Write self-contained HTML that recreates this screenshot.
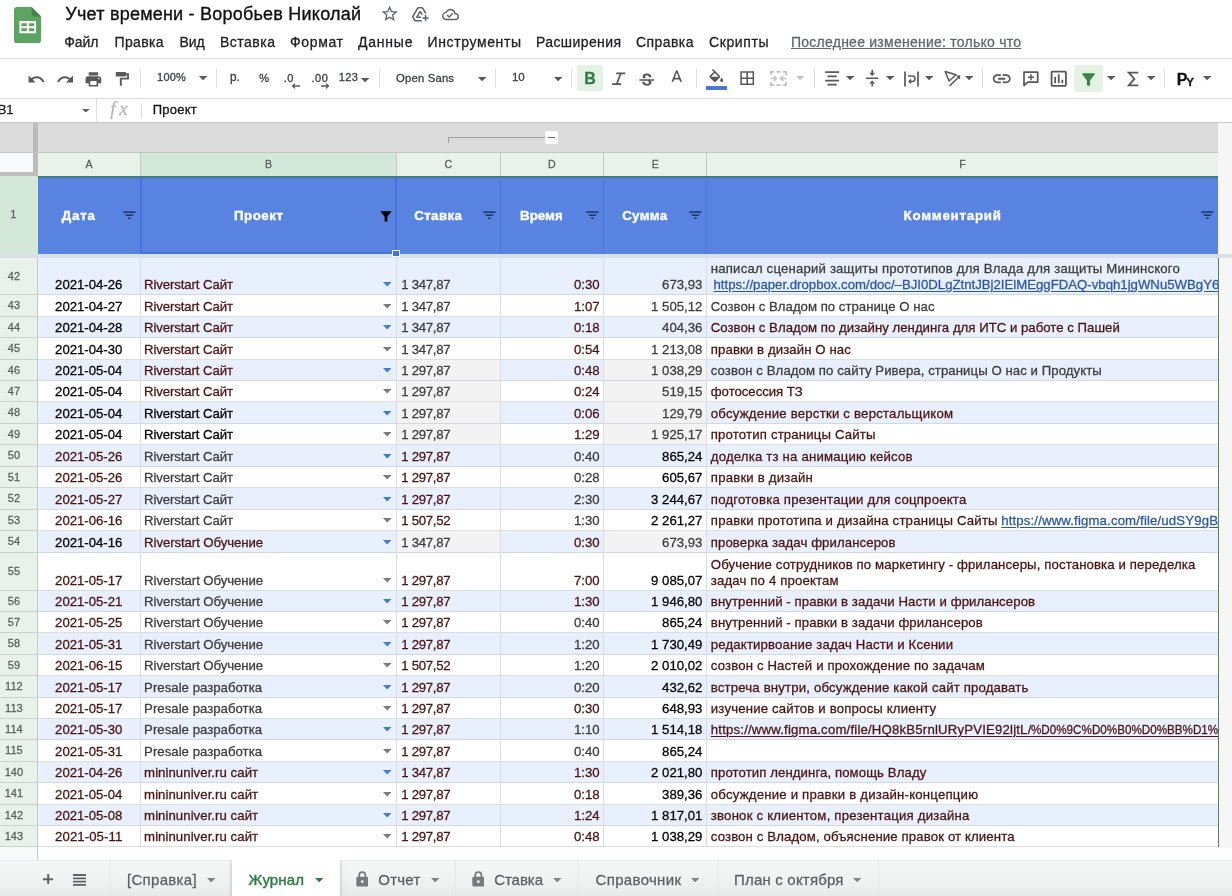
<!DOCTYPE html>
<html><head><meta charset="utf-8"><title>Sheet</title><style>
html,body{margin:0;padding:0;background:#fff}
#r{position:relative;width:1232px;height:896px;overflow:hidden;background:#fff;font-family:"Liberation Sans", sans-serif}
#r div,#r svg,#r span{position:absolute;display:block}
#r span{white-space:pre;line-height:0;-webkit-text-stroke-width:0.28px}
</style></head><body><div id="r">
<div style="left:0.00px;top:58.00px;width:1232.00px;height:1.00px;background:#dadce0;"></div>
<div style="left:0.00px;top:97.50px;width:1232.00px;height:1.00px;background:#d8dadd;"></div>
<div style="left:0.00px;top:122.00px;width:1232.00px;height:1.00px;background:#c8c8c8;"></div>
<div style="left:139.90px;top:68.50px;width:1.00px;height:19.50px;background:#dadce0;"></div>
<div style="left:215.90px;top:68.50px;width:1.00px;height:19.50px;background:#dadce0;"></div>
<div style="left:378.50px;top:68.50px;width:1.00px;height:19.50px;background:#dadce0;"></div>
<div style="left:494.90px;top:68.50px;width:1.00px;height:19.50px;background:#dadce0;"></div>
<div style="left:570.90px;top:68.50px;width:1.00px;height:19.50px;background:#dadce0;"></div>
<div style="left:696.20px;top:68.50px;width:1.00px;height:19.50px;background:#dadce0;"></div>
<div style="left:813.70px;top:68.50px;width:1.00px;height:19.50px;background:#dadce0;"></div>
<div style="left:982.20px;top:68.50px;width:1.00px;height:19.50px;background:#dadce0;"></div>
<div style="left:1164.20px;top:68.50px;width:1.00px;height:19.50px;background:#dadce0;"></div>
<div style="left:95.80px;top:99.00px;width:1.00px;height:23.00px;background:#dadce0;"></div>
<div style="left:141.00px;top:102.50px;width:1.00px;height:15.00px;background:#dadce0;"></div>
<div style="left:0.00px;top:123.00px;width:1218.40px;height:29.30px;background:#dcdcdc;"></div>
<div style="left:1218.40px;top:123.00px;width:13.60px;height:724.50px;background:#f6f6f6;"></div>
<div style="left:0.00px;top:152.30px;width:33.00px;height:20.20px;background:#f8f9fa;"></div>
<div style="left:33.00px;top:123.00px;width:4.70px;height:53.30px;background:#bcbcbc;"></div>
<div style="left:0.00px;top:172.40px;width:37.70px;height:3.90px;background:#bcbcbc;"></div>
<div style="left:37.70px;top:152.30px;width:1180.70px;height:24.00px;background:#e8f2ea;"></div>
<div style="left:140.50px;top:152.30px;width:256.10px;height:24.00px;background:#d4e8da;"></div>
<div style="left:0.00px;top:151.80px;width:1218.40px;height:1.00px;background:#c4c6c4;"></div>
<div style="left:140.00px;top:152.30px;width:1.00px;height:24.00px;background:#c3c9c4;"></div>
<div style="left:396.00px;top:152.30px;width:1.00px;height:24.00px;background:#c3c9c4;"></div>
<div style="left:500.00px;top:152.30px;width:1.00px;height:24.00px;background:#c3c9c4;"></div>
<div style="left:603.00px;top:152.30px;width:1.00px;height:24.00px;background:#c3c9c4;"></div>
<div style="left:706.00px;top:152.30px;width:1.00px;height:24.00px;background:#c3c9c4;"></div>
<div style="left:448.00px;top:136.80px;width:97.50px;height:1.00px;background:#a2a2a2;"></div>
<div style="left:448.00px;top:136.80px;width:1.00px;height:6.50px;background:#a2a2a2;"></div>
<div style="left:545.00px;top:130.80px;width:13.00px;height:13.20px;background:#ffffff;border-radius:2px;"></div>
<div style="left:548.20px;top:137.20px;width:6.60px;height:1.20px;background:#6a6a6a;"></div>
<div style="left:0.00px;top:176.30px;width:37.70px;height:77.40px;background:#d4e8da;"></div>
<div style="left:37.70px;top:176.30px;width:1180.70px;height:77.40px;background:#5983e1;"></div>
<div style="left:140.00px;top:177.00px;width:1.00px;height:76.70px;background:#4f78d6;"></div>
<div style="left:396.10px;top:177.00px;width:1.00px;height:76.70px;background:#4f78d6;"></div>
<div style="left:499.80px;top:177.00px;width:1.00px;height:76.70px;background:#4f78d6;"></div>
<div style="left:603.00px;top:177.00px;width:1.00px;height:76.70px;background:#4f78d6;"></div>
<div style="left:706.30px;top:177.00px;width:1.00px;height:76.70px;background:#4f78d6;"></div>
<div style="left:140.20px;top:176.30px;width:256.80px;height:2.00px;background:#4672da;"></div>
<div style="left:140.20px;top:251.90px;width:256.80px;height:2.00px;background:#4672da;"></div>
<div style="left:140.20px;top:176.30px;width:2.00px;height:77.40px;background:#4672da;"></div>
<div style="left:395.20px;top:176.30px;width:2.00px;height:77.40px;background:#4672da;"></div>
<div style="left:37.70px;top:175.80px;width:1180.70px;height:1.80px;background:#447a84;"></div>
<div style="left:0.00px;top:253.70px;width:1232.00px;height:4.30px;background:#dcdfe6;"></div>
<div style="left:37.70px;top:253.70px;width:1180.70px;height:4.30px;background:#d9e0f0;"></div>
<div style="left:0.00px;top:258.00px;width:37.70px;height:37.00px;background:#e8f2ea;"></div>
<div style="left:0.00px;top:294.00px;width:37.20px;height:1.00px;background:#c9d2cb;"></div>
<div style="left:37.70px;top:258.00px;width:1180.70px;height:37.00px;background:#e8effd;"></div>
<div style="left:37.70px;top:294.00px;width:1180.70px;height:1.00px;background:#d3d7e0;"></div>
<div style="left:0.00px;top:295.00px;width:37.70px;height:22.00px;background:#e8f2ea;"></div>
<div style="left:0.00px;top:316.00px;width:37.20px;height:1.00px;background:#c9d2cb;"></div>
<div style="left:37.70px;top:316.00px;width:1180.70px;height:1.00px;background:#dcdee2;"></div>
<div style="left:0.00px;top:317.00px;width:37.70px;height:21.00px;background:#e8f2ea;"></div>
<div style="left:0.00px;top:337.00px;width:37.20px;height:1.00px;background:#c9d2cb;"></div>
<div style="left:37.70px;top:317.00px;width:1180.70px;height:21.00px;background:#e8effd;"></div>
<div style="left:37.70px;top:337.00px;width:1180.70px;height:1.00px;background:#d3d7e0;"></div>
<div style="left:0.00px;top:338.00px;width:37.70px;height:22.00px;background:#e8f2ea;"></div>
<div style="left:0.00px;top:359.00px;width:37.20px;height:1.00px;background:#c9d2cb;"></div>
<div style="left:37.70px;top:359.00px;width:1180.70px;height:1.00px;background:#dcdee2;"></div>
<div style="left:0.00px;top:360.00px;width:37.70px;height:21.00px;background:#e8f2ea;"></div>
<div style="left:0.00px;top:380.00px;width:37.20px;height:1.00px;background:#c9d2cb;"></div>
<div style="left:37.70px;top:360.00px;width:1180.70px;height:21.00px;background:#e8effd;"></div>
<div style="left:396.60px;top:360.00px;width:103.70px;height:21.00px;background:#f3f3f3;"></div>
<div style="left:603.50px;top:360.00px;width:103.30px;height:21.00px;background:#f3f3f3;"></div>
<div style="left:37.70px;top:380.00px;width:1180.70px;height:1.00px;background:#d3d7e0;"></div>
<div style="left:0.00px;top:381.00px;width:37.70px;height:21.00px;background:#e8f2ea;"></div>
<div style="left:0.00px;top:401.00px;width:37.20px;height:1.00px;background:#c9d2cb;"></div>
<div style="left:396.60px;top:381.00px;width:103.70px;height:21.00px;background:#f3f3f3;"></div>
<div style="left:603.50px;top:381.00px;width:103.30px;height:21.00px;background:#f3f3f3;"></div>
<div style="left:37.70px;top:401.00px;width:1180.70px;height:1.00px;background:#dcdee2;"></div>
<div style="left:0.00px;top:402.00px;width:37.70px;height:22.00px;background:#e8f2ea;"></div>
<div style="left:0.00px;top:423.00px;width:37.20px;height:1.00px;background:#c9d2cb;"></div>
<div style="left:37.70px;top:402.00px;width:1180.70px;height:22.00px;background:#e8effd;"></div>
<div style="left:396.60px;top:402.00px;width:103.70px;height:22.00px;background:#f3f3f3;"></div>
<div style="left:603.50px;top:402.00px;width:103.30px;height:22.00px;background:#f3f3f3;"></div>
<div style="left:37.70px;top:423.00px;width:1180.70px;height:1.00px;background:#d3d7e0;"></div>
<div style="left:0.00px;top:424.00px;width:37.70px;height:21.00px;background:#e8f2ea;"></div>
<div style="left:0.00px;top:444.00px;width:37.20px;height:1.00px;background:#c9d2cb;"></div>
<div style="left:396.60px;top:424.00px;width:103.70px;height:21.00px;background:#f3f3f3;"></div>
<div style="left:603.50px;top:424.00px;width:103.30px;height:21.00px;background:#f3f3f3;"></div>
<div style="left:37.70px;top:444.00px;width:1180.70px;height:1.00px;background:#dcdee2;"></div>
<div style="left:0.00px;top:445.00px;width:37.70px;height:22.00px;background:#e8f2ea;"></div>
<div style="left:0.00px;top:466.00px;width:37.20px;height:1.00px;background:#c9d2cb;"></div>
<div style="left:37.70px;top:445.00px;width:1180.70px;height:22.00px;background:#e8effd;"></div>
<div style="left:37.70px;top:466.00px;width:1180.70px;height:1.00px;background:#d3d7e0;"></div>
<div style="left:0.00px;top:467.00px;width:37.70px;height:21.00px;background:#e8f2ea;"></div>
<div style="left:0.00px;top:487.00px;width:37.20px;height:1.00px;background:#c9d2cb;"></div>
<div style="left:37.70px;top:487.00px;width:1180.70px;height:1.00px;background:#dcdee2;"></div>
<div style="left:0.00px;top:488.00px;width:37.70px;height:22.00px;background:#e8f2ea;"></div>
<div style="left:0.00px;top:509.00px;width:37.20px;height:1.00px;background:#c9d2cb;"></div>
<div style="left:37.70px;top:488.00px;width:1180.70px;height:22.00px;background:#e8effd;"></div>
<div style="left:37.70px;top:509.00px;width:1180.70px;height:1.00px;background:#d3d7e0;"></div>
<div style="left:0.00px;top:510.00px;width:37.70px;height:21.00px;background:#e8f2ea;"></div>
<div style="left:0.00px;top:530.00px;width:37.20px;height:1.00px;background:#c9d2cb;"></div>
<div style="left:37.70px;top:530.00px;width:1180.70px;height:1.00px;background:#dcdee2;"></div>
<div style="left:0.00px;top:531.00px;width:37.70px;height:22.00px;background:#e8f2ea;"></div>
<div style="left:0.00px;top:552.00px;width:37.20px;height:1.00px;background:#c9d2cb;"></div>
<div style="left:37.70px;top:531.00px;width:1180.70px;height:22.00px;background:#e8effd;"></div>
<div style="left:396.60px;top:531.00px;width:103.70px;height:22.00px;background:#f3f3f3;"></div>
<div style="left:603.50px;top:531.00px;width:103.30px;height:22.00px;background:#f3f3f3;"></div>
<div style="left:37.70px;top:552.00px;width:1180.70px;height:1.00px;background:#d3d7e0;"></div>
<div style="left:0.00px;top:553.00px;width:37.70px;height:38.00px;background:#e8f2ea;"></div>
<div style="left:0.00px;top:590.00px;width:37.20px;height:1.00px;background:#c9d2cb;"></div>
<div style="left:37.70px;top:590.00px;width:1180.70px;height:1.00px;background:#dcdee2;"></div>
<div style="left:0.00px;top:591.00px;width:37.70px;height:21.00px;background:#e8f2ea;"></div>
<div style="left:0.00px;top:611.00px;width:37.20px;height:1.00px;background:#c9d2cb;"></div>
<div style="left:37.70px;top:591.00px;width:1180.70px;height:21.00px;background:#e8effd;"></div>
<div style="left:37.70px;top:611.00px;width:1180.70px;height:1.00px;background:#d3d7e0;"></div>
<div style="left:0.00px;top:612.00px;width:37.70px;height:21.00px;background:#e8f2ea;"></div>
<div style="left:0.00px;top:632.00px;width:37.20px;height:1.00px;background:#c9d2cb;"></div>
<div style="left:37.70px;top:632.00px;width:1180.70px;height:1.00px;background:#dcdee2;"></div>
<div style="left:0.00px;top:633.00px;width:37.70px;height:22.00px;background:#e8f2ea;"></div>
<div style="left:0.00px;top:654.00px;width:37.20px;height:1.00px;background:#c9d2cb;"></div>
<div style="left:37.70px;top:633.00px;width:1180.70px;height:22.00px;background:#e8effd;"></div>
<div style="left:37.70px;top:654.00px;width:1180.70px;height:1.00px;background:#d3d7e0;"></div>
<div style="left:0.00px;top:655.00px;width:37.70px;height:21.00px;background:#e8f2ea;"></div>
<div style="left:0.00px;top:675.00px;width:37.20px;height:1.00px;background:#c9d2cb;"></div>
<div style="left:37.70px;top:675.00px;width:1180.70px;height:1.00px;background:#dcdee2;"></div>
<div style="left:0.00px;top:676.00px;width:37.70px;height:22.00px;background:#e8f2ea;"></div>
<div style="left:0.00px;top:697.00px;width:37.20px;height:1.00px;background:#c9d2cb;"></div>
<div style="left:37.70px;top:676.00px;width:1180.70px;height:22.00px;background:#e8effd;"></div>
<div style="left:37.70px;top:697.00px;width:1180.70px;height:1.00px;background:#d3d7e0;"></div>
<div style="left:0.00px;top:698.00px;width:37.70px;height:21.00px;background:#e8f2ea;"></div>
<div style="left:0.00px;top:718.00px;width:37.20px;height:1.00px;background:#c9d2cb;"></div>
<div style="left:37.70px;top:718.00px;width:1180.70px;height:1.00px;background:#dcdee2;"></div>
<div style="left:0.00px;top:719.00px;width:37.70px;height:21.00px;background:#e8f2ea;"></div>
<div style="left:0.00px;top:739.00px;width:37.20px;height:1.00px;background:#c9d2cb;"></div>
<div style="left:37.70px;top:719.00px;width:1180.70px;height:21.00px;background:#e8effd;"></div>
<div style="left:37.70px;top:739.00px;width:1180.70px;height:1.00px;background:#d3d7e0;"></div>
<div style="left:0.00px;top:740.00px;width:37.70px;height:22.00px;background:#e8f2ea;"></div>
<div style="left:0.00px;top:761.00px;width:37.20px;height:1.00px;background:#c9d2cb;"></div>
<div style="left:37.70px;top:761.00px;width:1180.70px;height:1.00px;background:#dcdee2;"></div>
<div style="left:0.00px;top:762.00px;width:37.70px;height:21.00px;background:#e8f2ea;"></div>
<div style="left:0.00px;top:782.00px;width:37.20px;height:1.00px;background:#c9d2cb;"></div>
<div style="left:37.70px;top:762.00px;width:1180.70px;height:21.00px;background:#e8effd;"></div>
<div style="left:37.70px;top:782.00px;width:1180.70px;height:1.00px;background:#d3d7e0;"></div>
<div style="left:0.00px;top:783.00px;width:37.70px;height:22.00px;background:#e8f2ea;"></div>
<div style="left:0.00px;top:804.00px;width:37.20px;height:1.00px;background:#c9d2cb;"></div>
<div style="left:37.70px;top:804.00px;width:1180.70px;height:1.00px;background:#dcdee2;"></div>
<div style="left:0.00px;top:805.00px;width:37.70px;height:21.00px;background:#e8f2ea;"></div>
<div style="left:0.00px;top:825.00px;width:37.20px;height:1.00px;background:#c9d2cb;"></div>
<div style="left:37.70px;top:805.00px;width:1180.70px;height:21.00px;background:#e8effd;"></div>
<div style="left:37.70px;top:825.00px;width:1180.70px;height:1.00px;background:#d3d7e0;"></div>
<div style="left:0.00px;top:826.00px;width:37.70px;height:21.00px;background:#e8f2ea;"></div>
<div style="left:0.00px;top:846.00px;width:37.20px;height:1.00px;background:#c9d2cb;"></div>
<div style="left:37.70px;top:846.00px;width:1180.70px;height:1.00px;background:#dcdee2;"></div>
<div style="left:140.00px;top:257.50px;width:1.00px;height:589.50px;background:#d9dce3;"></div>
<div style="left:396.00px;top:257.50px;width:1.00px;height:589.50px;background:#d9dce3;"></div>
<div style="left:500.00px;top:257.50px;width:1.00px;height:589.50px;background:#d9dce3;"></div>
<div style="left:603.00px;top:257.50px;width:1.00px;height:589.50px;background:#d9dce3;"></div>
<div style="left:706.00px;top:257.50px;width:1.00px;height:589.50px;background:#d9dce3;"></div>
<div style="left:37.20px;top:257.50px;width:1.00px;height:602.50px;background:#c3c9c4;"></div>
<div style="left:0.00px;top:847.00px;width:37.20px;height:13.00px;background:#f8f9fa;"></div>
<div style="left:0.00px;top:860.00px;width:1232.00px;height:36.00px;background:linear-gradient(#f5f6f6 0%,#f2f3f3 45%,#e9eaea 100%);"></div>
<div style="left:0.00px;top:859.60px;width:1232.00px;height:1.00px;background:#e9eaeb;"></div>
<div style="left:0;top:860px;width:1232px;height:36px;overflow:hidden"><div style="left:231.5px;top:0;width:108.5px;height:40px;background:#fff;box-shadow:0 0 4px rgba(0,0,0,0.28)"></div></div>
<div style="left:108.90px;top:860.00px;width:1.00px;height:36.00px;background:#e6e7e8;"></div>
<div style="left:455.10px;top:860.00px;width:1.00px;height:36.00px;background:#e6e7e8;"></div>
<div style="left:578.10px;top:860.00px;width:1.00px;height:36.00px;background:#e6e7e8;"></div>
<div style="left:716.50px;top:860.00px;width:1.00px;height:36.00px;background:#e6e7e8;"></div>
<div style="left:878.00px;top:860.00px;width:1.00px;height:36.00px;background:#e6e7e8;"></div>
<div style="left:577.10px;top:64.80px;width:25.70px;height:26.40px;background:#e4f2e6;border-radius:3px;"></div>
<div style="left:706.00px;top:86.30px;width:21.00px;height:3.60px;background:#4a76da;"></div>
<div style="left:1073.90px;top:64.70px;width:28.80px;height:27.00px;background:#e4f2e6;border-radius:3px;"></div>
<div id="tx" style="left:0;top:0;width:1232px;height:896px;will-change:transform">
<span style="top:13.76px;font-size:18px;color:#111111;letter-spacing:0.222px;left:65.30px;-webkit-text-stroke-width:0.35px;">Учет времени - Воробьев Николай</span>
<span style="top:41.75px;font-size:14px;color:#202124;letter-spacing:-0.107px;left:64.30px;">Файл</span>
<span style="top:41.75px;font-size:14px;color:#202124;letter-spacing:0.341px;left:114.60px;">Правка</span>
<span style="top:41.75px;font-size:14px;color:#202124;letter-spacing:-0.164px;left:179.60px;">Вид</span>
<span style="top:41.75px;font-size:14px;color:#202124;letter-spacing:0.492px;left:220.00px;">Вставка</span>
<span style="top:41.75px;font-size:14px;color:#202124;letter-spacing:0.653px;left:290.00px;">Формат</span>
<span style="top:41.75px;font-size:14px;color:#202124;letter-spacing:0.781px;left:358.00px;">Данные</span>
<span style="top:41.75px;font-size:14px;color:#202124;letter-spacing:0.620px;left:427.50px;">Инструменты</span>
<span style="top:41.75px;font-size:14px;color:#202124;letter-spacing:0.398px;left:536.00px;">Расширения</span>
<span style="top:41.75px;font-size:14px;color:#202124;letter-spacing:0.430px;left:636.00px;">Справка</span>
<span style="top:41.75px;font-size:14px;color:#202124;letter-spacing:0.599px;left:709.00px;">Скрипты</span>
<span style="top:41.75px;font-size:14px;color:#63676b;letter-spacing:0.245px;left:791.00px;text-decoration:underline;text-underline-offset:1px;">Последнее изменение: только что</span>
<span style="top:77.49px;font-size:11px;color:#3c4043;letter-spacing:0.186px;left:157.10px;-webkit-text-stroke:0.3px #3c4043;">100%</span>
<span style="top:76.79px;font-size:13.6px;color:#3c4043;left:230.00px;transform:scaleX(0.8639);transform-origin:0 0;-webkit-text-stroke:0.3px #3c4043;">р.</span>
<span style="top:77.59px;font-size:11px;color:#3c4043;letter-spacing:-0.781px;left:259.20px;-webkit-text-stroke:0.3px #3c4043;">%</span>
<span style="top:77.59px;font-size:11px;color:#3c4043;letter-spacing:0.512px;left:283.80px;-webkit-text-stroke:0.3px #3c4043;">.0</span>
<span style="top:77.59px;font-size:11px;color:#3c4043;letter-spacing:0.652px;left:311.40px;-webkit-text-stroke:0.3px #3c4043;">.00</span>
<span style="top:77.49px;font-size:11px;color:#3c4043;letter-spacing:0.370px;left:338.70px;-webkit-text-stroke:0.3px #3c4043;">123</span>
<span style="top:78.18px;font-size:11.3px;color:#3c4043;letter-spacing:0.184px;left:396.00px;-webkit-text-stroke:0.3px #3c4043;">Open Sans</span>
<span style="top:77.22px;font-size:11.5px;color:#3c4043;letter-spacing:-0.297px;left:512.10px;-webkit-text-stroke:0.3px #3c4043;">10</span>
<span style="top:109.90px;font-size:13px;color:#202124;letter-spacing:-0.300px;left:-2.20px;">B1</span>
<span style="top:109.42px;font-size:19px;color:#b8b8b8;letter-spacing:3.881px;left:110.20px;font-family:'Liberation Serif',serif;font-style:italic;">fx</span>
<span style="top:109.90px;font-size:13px;color:#111;letter-spacing:0.254px;left:152.70px;">Проект</span>
<span style="top:164.13px;font-size:10.6px;color:#5a5f5c;left:89.00px;transform:translateX(-50%);margin-left:0.00px;">A</span>
<span style="top:164.13px;font-size:10.6px;color:#5a5f5c;left:268.50px;transform:translateX(-50%);margin-left:0.00px;">B</span>
<span style="top:164.13px;font-size:10.6px;color:#5a5f5c;left:448.40px;transform:translateX(-50%);margin-left:0.00px;">C</span>
<span style="top:164.13px;font-size:10.6px;color:#5a5f5c;left:551.90px;transform:translateX(-50%);margin-left:0.00px;">D</span>
<span style="top:164.13px;font-size:10.6px;color:#5a5f5c;left:655.20px;transform:translateX(-50%);margin-left:0.00px;">E</span>
<span style="top:164.13px;font-size:10.6px;color:#5a5f5c;left:962.60px;transform:translateX(-50%);margin-left:0.00px;">F</span>
<span style="top:214.19px;font-size:11px;color:#5a5f5c;left:13.40px;transform:translateX(-50%);margin-left:0.00px;">1</span>
<span style="top:215.88px;font-size:13.33px;color:#ffffff;font-weight:700;letter-spacing:0.814px;left:61.70px;-webkit-text-stroke:0.35px #fff;">Дата</span>
<span style="top:215.88px;font-size:13.33px;color:#ffffff;font-weight:700;letter-spacing:0.503px;left:234.00px;-webkit-text-stroke:0.35px #fff;">Проект</span>
<span style="top:215.88px;font-size:13.33px;color:#ffffff;font-weight:700;letter-spacing:0.391px;left:414.20px;-webkit-text-stroke:0.35px #fff;">Ставка</span>
<span style="top:215.88px;font-size:13.33px;color:#ffffff;font-weight:700;letter-spacing:0.040px;left:520.00px;-webkit-text-stroke:0.35px #fff;">Время</span>
<span style="top:215.88px;font-size:13.33px;color:#ffffff;font-weight:700;letter-spacing:0.293px;left:622.20px;-webkit-text-stroke:0.35px #fff;">Сумма</span>
<span style="top:215.88px;font-size:13.33px;color:#ffffff;font-weight:700;letter-spacing:0.773px;left:903.50px;-webkit-text-stroke:0.35px #fff;">Комментарий</span>
<span style="top:275.99px;font-size:11px;color:#5a5f5c;left:13.90px;transform:translateX(-50%);margin-left:0.00px;">42</span>
<span style="top:285.23px;font-size:13.2px;color:#000000;letter-spacing:-0.030px;left:88.70px;transform:translateX(-50%);margin-left:-0.01px;">2021-04-26</span>
<span style="top:285.23px;font-size:13.2px;color:#491313;letter-spacing:-0.114px;left:144.10px;">Riverstart Сайт</span>
<span style="top:285.23px;font-size:13.2px;color:#3d3d3d;letter-spacing:-0.292px;left:401.30px;">1 347,87</span>
<span style="top:285.23px;font-size:13.2px;color:#491313;right:632.40px;">0:30</span>
<span style="top:285.23px;font-size:13.2px;color:#3d3d3d;right:529.60px;">673,93</span>
<span style="top:305.49px;font-size:11px;color:#5a5f5c;left:13.90px;transform:translateX(-50%);margin-left:0.00px;">43</span>
<span style="top:307.23px;font-size:13.2px;color:#000000;letter-spacing:-0.030px;left:88.70px;transform:translateX(-50%);margin-left:-0.01px;">2021-04-27</span>
<span style="top:307.23px;font-size:13.2px;color:#491313;letter-spacing:-0.114px;left:144.10px;">Riverstart Сайт</span>
<span style="top:307.23px;font-size:13.2px;color:#3d3d3d;letter-spacing:-0.292px;left:401.30px;">1 347,87</span>
<span style="top:307.23px;font-size:13.2px;color:#491313;right:632.40px;">1:07</span>
<span style="top:307.23px;font-size:13.2px;color:#3d3d3d;right:529.60px;">1 505,12</span>
<span style="top:307.23px;font-size:13.2px;color:#3d3d3d;letter-spacing:0.010px;left:710.80px;">Созвон с Владом по странице О нас</span>
<span style="top:326.99px;font-size:11px;color:#5a5f5c;left:13.90px;transform:translateX(-50%);margin-left:0.00px;">44</span>
<span style="top:328.23px;font-size:13.2px;color:#000000;letter-spacing:-0.030px;left:88.70px;transform:translateX(-50%);margin-left:-0.01px;">2021-04-28</span>
<span style="top:328.23px;font-size:13.2px;color:#491313;letter-spacing:-0.114px;left:144.10px;">Riverstart Сайт</span>
<span style="top:328.23px;font-size:13.2px;color:#3d3d3d;letter-spacing:-0.292px;left:401.30px;">1 347,87</span>
<span style="top:328.23px;font-size:13.2px;color:#491313;right:632.40px;">0:18</span>
<span style="top:328.23px;font-size:13.2px;color:#3d3d3d;right:529.60px;">404,36</span>
<span style="top:328.23px;font-size:13.2px;color:#491313;letter-spacing:0.019px;left:710.80px;">Созвон с Владом по дизайну лендинга для ИТС и работе с Пашей</span>
<span style="top:348.49px;font-size:11px;color:#5a5f5c;left:13.90px;transform:translateX(-50%);margin-left:0.00px;">45</span>
<span style="top:350.23px;font-size:13.2px;color:#000000;letter-spacing:-0.030px;left:88.70px;transform:translateX(-50%);margin-left:-0.01px;">2021-04-30</span>
<span style="top:350.23px;font-size:13.2px;color:#491313;letter-spacing:-0.114px;left:144.10px;">Riverstart Сайт</span>
<span style="top:350.23px;font-size:13.2px;color:#3d3d3d;letter-spacing:-0.292px;left:401.30px;">1 347,87</span>
<span style="top:350.23px;font-size:13.2px;color:#491313;right:632.40px;">0:54</span>
<span style="top:350.23px;font-size:13.2px;color:#3d3d3d;right:529.60px;">1 213,08</span>
<span style="top:350.23px;font-size:13.2px;color:#491313;letter-spacing:0.096px;left:710.80px;">правки в дизайн О нас</span>
<span style="top:369.99px;font-size:11px;color:#5a5f5c;left:13.90px;transform:translateX(-50%);margin-left:0.00px;">46</span>
<span style="top:371.23px;font-size:13.2px;color:#000000;letter-spacing:-0.030px;left:88.70px;transform:translateX(-50%);margin-left:-0.01px;">2021-05-04</span>
<span style="top:371.23px;font-size:13.2px;color:#491313;letter-spacing:-0.114px;left:144.10px;">Riverstart Сайт</span>
<span style="top:371.23px;font-size:13.2px;color:#3d3d3d;letter-spacing:-0.292px;left:401.30px;">1 297,87</span>
<span style="top:371.23px;font-size:13.2px;color:#491313;right:632.40px;">0:48</span>
<span style="top:371.23px;font-size:13.2px;color:#3d3d3d;right:529.60px;">1 038,29</span>
<span style="top:371.23px;font-size:13.2px;color:#3d3d3d;letter-spacing:0.066px;left:710.80px;">созвон с Владом по сайту Ривера, страницы О нас и Продукты</span>
<span style="top:390.99px;font-size:11px;color:#5a5f5c;left:13.90px;transform:translateX(-50%);margin-left:0.00px;">47</span>
<span style="top:392.23px;font-size:13.2px;color:#000000;letter-spacing:-0.030px;left:88.70px;transform:translateX(-50%);margin-left:-0.01px;">2021-05-04</span>
<span style="top:392.23px;font-size:13.2px;color:#491313;letter-spacing:-0.114px;left:144.10px;">Riverstart Сайт</span>
<span style="top:392.23px;font-size:13.2px;color:#3d3d3d;letter-spacing:-0.292px;left:401.30px;">1 297,87</span>
<span style="top:392.23px;font-size:13.2px;color:#491313;right:632.40px;">0:24</span>
<span style="top:392.23px;font-size:13.2px;color:#3d3d3d;right:529.60px;">519,15</span>
<span style="top:392.23px;font-size:13.2px;color:#491313;letter-spacing:-0.032px;left:710.80px;">фотосессия ТЗ</span>
<span style="top:412.49px;font-size:11px;color:#5a5f5c;left:13.90px;transform:translateX(-50%);margin-left:0.00px;">48</span>
<span style="top:414.23px;font-size:13.2px;color:#000000;letter-spacing:-0.030px;left:88.70px;transform:translateX(-50%);margin-left:-0.01px;">2021-05-04</span>
<span style="top:414.23px;font-size:13.2px;color:#000000;letter-spacing:-0.114px;left:144.10px;">Riverstart Сайт</span>
<span style="top:414.23px;font-size:13.2px;color:#3d3d3d;letter-spacing:-0.292px;left:401.30px;">1 297,87</span>
<span style="top:414.23px;font-size:13.2px;color:#491313;right:632.40px;">0:06</span>
<span style="top:414.23px;font-size:13.2px;color:#3d3d3d;right:529.60px;">129,79</span>
<span style="top:414.23px;font-size:13.2px;color:#491313;letter-spacing:0.211px;left:710.80px;">обсуждение верстки с верстальщиком</span>
<span style="top:433.99px;font-size:11px;color:#5a5f5c;left:13.90px;transform:translateX(-50%);margin-left:0.00px;">49</span>
<span style="top:435.23px;font-size:13.2px;color:#000000;letter-spacing:-0.030px;left:88.70px;transform:translateX(-50%);margin-left:-0.01px;">2021-05-04</span>
<span style="top:435.23px;font-size:13.2px;color:#000000;letter-spacing:-0.114px;left:144.10px;">Riverstart Сайт</span>
<span style="top:435.23px;font-size:13.2px;color:#3d3d3d;letter-spacing:-0.292px;left:401.30px;">1 297,87</span>
<span style="top:435.23px;font-size:13.2px;color:#491313;right:632.40px;">1:29</span>
<span style="top:435.23px;font-size:13.2px;color:#3d3d3d;right:529.60px;">1 925,17</span>
<span style="top:435.23px;font-size:13.2px;color:#491313;letter-spacing:0.158px;left:710.80px;">прототип страницы Сайты</span>
<span style="top:455.49px;font-size:11px;color:#5a5f5c;left:13.90px;transform:translateX(-50%);margin-left:0.00px;">50</span>
<span style="top:457.23px;font-size:13.2px;color:#491313;letter-spacing:-0.030px;left:88.70px;transform:translateX(-50%);margin-left:-0.01px;">2021-05-26</span>
<span style="top:457.23px;font-size:13.2px;color:#3d3d3d;letter-spacing:-0.114px;left:144.10px;">Riverstart Сайт</span>
<span style="top:457.23px;font-size:13.2px;color:#491313;letter-spacing:-0.292px;left:401.30px;">1 297,87</span>
<span style="top:457.23px;font-size:13.2px;color:#3d3d3d;right:632.40px;">0:40</span>
<span style="top:457.23px;font-size:13.2px;color:#000000;right:529.60px;">865,24</span>
<span style="top:457.23px;font-size:13.2px;color:#491313;letter-spacing:0.179px;left:710.80px;">доделка тз на анимацию кейсов</span>
<span style="top:476.99px;font-size:11px;color:#5a5f5c;left:13.90px;transform:translateX(-50%);margin-left:0.00px;">51</span>
<span style="top:478.23px;font-size:13.2px;color:#491313;letter-spacing:-0.030px;left:88.70px;transform:translateX(-50%);margin-left:-0.01px;">2021-05-26</span>
<span style="top:478.23px;font-size:13.2px;color:#3d3d3d;letter-spacing:-0.114px;left:144.10px;">Riverstart Сайт</span>
<span style="top:478.23px;font-size:13.2px;color:#491313;letter-spacing:-0.292px;left:401.30px;">1 297,87</span>
<span style="top:478.23px;font-size:13.2px;color:#3d3d3d;right:632.40px;">0:28</span>
<span style="top:478.23px;font-size:13.2px;color:#000000;right:529.60px;">605,67</span>
<span style="top:478.23px;font-size:13.2px;color:#491313;letter-spacing:0.194px;left:710.80px;">правки в дизайн</span>
<span style="top:498.49px;font-size:11px;color:#5a5f5c;left:13.90px;transform:translateX(-50%);margin-left:0.00px;">52</span>
<span style="top:500.23px;font-size:13.2px;color:#491313;letter-spacing:-0.030px;left:88.70px;transform:translateX(-50%);margin-left:-0.01px;">2021-05-27</span>
<span style="top:500.23px;font-size:13.2px;color:#3d3d3d;letter-spacing:-0.114px;left:144.10px;">Riverstart Сайт</span>
<span style="top:500.23px;font-size:13.2px;color:#491313;letter-spacing:-0.292px;left:401.30px;">1 297,87</span>
<span style="top:500.23px;font-size:13.2px;color:#3d3d3d;right:632.40px;">2:30</span>
<span style="top:500.23px;font-size:13.2px;color:#000000;right:529.60px;">3 244,67</span>
<span style="top:500.23px;font-size:13.2px;color:#491313;letter-spacing:0.207px;left:710.80px;">подготовка презентации для соцпроекта</span>
<span style="top:519.99px;font-size:11px;color:#5a5f5c;left:13.90px;transform:translateX(-50%);margin-left:0.00px;">53</span>
<span style="top:521.23px;font-size:13.2px;color:#491313;letter-spacing:-0.030px;left:88.70px;transform:translateX(-50%);margin-left:-0.01px;">2021-06-16</span>
<span style="top:521.23px;font-size:13.2px;color:#3d3d3d;letter-spacing:-0.114px;left:144.10px;">Riverstart Сайт</span>
<span style="top:521.23px;font-size:13.2px;color:#491313;letter-spacing:-0.292px;left:401.30px;">1 507,52</span>
<span style="top:521.23px;font-size:13.2px;color:#3d3d3d;right:632.40px;">1:30</span>
<span style="top:521.23px;font-size:13.2px;color:#000000;right:529.60px;">2 261,27</span>
<span style="top:541.49px;font-size:11px;color:#5a5f5c;left:13.90px;transform:translateX(-50%);margin-left:0.00px;">54</span>
<span style="top:543.23px;font-size:13.2px;color:#000000;letter-spacing:-0.030px;left:88.70px;transform:translateX(-50%);margin-left:-0.01px;">2021-04-16</span>
<span style="top:543.23px;font-size:13.2px;color:#491313;letter-spacing:-0.077px;left:144.10px;">Riverstart Обучение</span>
<span style="top:543.23px;font-size:13.2px;color:#3d3d3d;letter-spacing:-0.292px;left:401.30px;">1 347,87</span>
<span style="top:543.23px;font-size:13.2px;color:#491313;right:632.40px;">0:30</span>
<span style="top:543.23px;font-size:13.2px;color:#3d3d3d;right:529.60px;">673,93</span>
<span style="top:543.23px;font-size:13.2px;color:#491313;letter-spacing:0.087px;left:710.80px;">проверка задач фрилансеров</span>
<span style="top:571.49px;font-size:11px;color:#5a5f5c;left:13.90px;transform:translateX(-50%);margin-left:0.00px;">55</span>
<span style="top:581.23px;font-size:13.2px;color:#491313;letter-spacing:-0.030px;left:88.70px;transform:translateX(-50%);margin-left:-0.01px;">2021-05-17</span>
<span style="top:581.23px;font-size:13.2px;color:#3d3d3d;letter-spacing:-0.077px;left:144.10px;">Riverstart Обучение</span>
<span style="top:581.23px;font-size:13.2px;color:#491313;letter-spacing:-0.292px;left:401.30px;">1 297,87</span>
<span style="top:581.23px;font-size:13.2px;color:#491313;right:632.40px;">7:00</span>
<span style="top:581.23px;font-size:13.2px;color:#000000;right:529.60px;">9 085,07</span>
<span style="top:600.99px;font-size:11px;color:#5a5f5c;left:13.90px;transform:translateX(-50%);margin-left:0.00px;">56</span>
<span style="top:602.23px;font-size:13.2px;color:#491313;letter-spacing:-0.030px;left:88.70px;transform:translateX(-50%);margin-left:-0.01px;">2021-05-21</span>
<span style="top:602.23px;font-size:13.2px;color:#3d3d3d;letter-spacing:-0.077px;left:144.10px;">Riverstart Обучение</span>
<span style="top:602.23px;font-size:13.2px;color:#491313;letter-spacing:-0.292px;left:401.30px;">1 297,87</span>
<span style="top:602.23px;font-size:13.2px;color:#491313;right:632.40px;">1:30</span>
<span style="top:602.23px;font-size:13.2px;color:#000000;right:529.60px;">1 946,80</span>
<span style="top:602.23px;font-size:13.2px;color:#491313;letter-spacing:0.093px;left:710.80px;">внутренний - правки в задачи Насти и фрилансеров</span>
<span style="top:621.99px;font-size:11px;color:#5a5f5c;left:13.90px;transform:translateX(-50%);margin-left:0.00px;">57</span>
<span style="top:623.23px;font-size:13.2px;color:#491313;letter-spacing:-0.030px;left:88.70px;transform:translateX(-50%);margin-left:-0.01px;">2021-05-25</span>
<span style="top:623.23px;font-size:13.2px;color:#3d3d3d;letter-spacing:-0.077px;left:144.10px;">Riverstart Обучение</span>
<span style="top:623.23px;font-size:13.2px;color:#491313;letter-spacing:-0.292px;left:401.30px;">1 297,87</span>
<span style="top:623.23px;font-size:13.2px;color:#3d3d3d;right:632.40px;">0:40</span>
<span style="top:623.23px;font-size:13.2px;color:#000000;right:529.60px;">865,24</span>
<span style="top:623.23px;font-size:13.2px;color:#491313;letter-spacing:0.093px;left:710.80px;">внутренний - правки в задачи фрилансеров</span>
<span style="top:643.49px;font-size:11px;color:#5a5f5c;left:13.90px;transform:translateX(-50%);margin-left:0.00px;">58</span>
<span style="top:645.23px;font-size:13.2px;color:#491313;letter-spacing:-0.030px;left:88.70px;transform:translateX(-50%);margin-left:-0.01px;">2021-05-31</span>
<span style="top:645.23px;font-size:13.2px;color:#3d3d3d;letter-spacing:-0.077px;left:144.10px;">Riverstart Обучение</span>
<span style="top:645.23px;font-size:13.2px;color:#491313;letter-spacing:-0.292px;left:401.30px;">1 297,87</span>
<span style="top:645.23px;font-size:13.2px;color:#3d3d3d;right:632.40px;">1:20</span>
<span style="top:645.23px;font-size:13.2px;color:#000000;right:529.60px;">1 730,49</span>
<span style="top:645.23px;font-size:13.2px;color:#491313;letter-spacing:0.151px;left:710.80px;">редактирвоание задач Насти и Ксении</span>
<span style="top:664.99px;font-size:11px;color:#5a5f5c;left:13.90px;transform:translateX(-50%);margin-left:0.00px;">59</span>
<span style="top:666.23px;font-size:13.2px;color:#491313;letter-spacing:-0.030px;left:88.70px;transform:translateX(-50%);margin-left:-0.01px;">2021-06-15</span>
<span style="top:666.23px;font-size:13.2px;color:#3d3d3d;letter-spacing:-0.077px;left:144.10px;">Riverstart Обучение</span>
<span style="top:666.23px;font-size:13.2px;color:#491313;letter-spacing:-0.292px;left:401.30px;">1 507,52</span>
<span style="top:666.23px;font-size:13.2px;color:#3d3d3d;right:632.40px;">1:20</span>
<span style="top:666.23px;font-size:13.2px;color:#000000;right:529.60px;">2 010,02</span>
<span style="top:666.23px;font-size:13.2px;color:#491313;letter-spacing:0.143px;left:710.80px;">созвон с Настей и прохождение по задачам</span>
<span style="top:686.49px;font-size:11px;color:#5a5f5c;left:13.90px;transform:translateX(-50%);margin-left:0.00px;">112</span>
<span style="top:688.23px;font-size:13.2px;color:#491313;letter-spacing:-0.030px;left:88.70px;transform:translateX(-50%);margin-left:-0.01px;">2021-05-17</span>
<span style="top:688.23px;font-size:13.2px;color:#3d3d3d;letter-spacing:0.020px;left:144.10px;">Presale разработка</span>
<span style="top:688.23px;font-size:13.2px;color:#491313;letter-spacing:-0.292px;left:401.30px;">1 297,87</span>
<span style="top:688.23px;font-size:13.2px;color:#3d3d3d;right:632.40px;">0:20</span>
<span style="top:688.23px;font-size:13.2px;color:#000000;right:529.60px;">432,62</span>
<span style="top:688.23px;font-size:13.2px;color:#491313;letter-spacing:0.162px;left:710.80px;">встреча внутри, обсуждение какой сайт продавать</span>
<span style="top:707.99px;font-size:11px;color:#5a5f5c;left:13.90px;transform:translateX(-50%);margin-left:0.00px;">113</span>
<span style="top:709.23px;font-size:13.2px;color:#491313;letter-spacing:-0.030px;left:88.70px;transform:translateX(-50%);margin-left:-0.01px;">2021-05-17</span>
<span style="top:709.23px;font-size:13.2px;color:#3d3d3d;letter-spacing:0.020px;left:144.10px;">Presale разработка</span>
<span style="top:709.23px;font-size:13.2px;color:#491313;letter-spacing:-0.292px;left:401.30px;">1 297,87</span>
<span style="top:709.23px;font-size:13.2px;color:#491313;right:632.40px;">0:30</span>
<span style="top:709.23px;font-size:13.2px;color:#000000;right:529.60px;">648,93</span>
<span style="top:709.23px;font-size:13.2px;color:#491313;letter-spacing:0.164px;left:710.80px;">изучение сайтов и вопросы клиенту</span>
<span style="top:728.99px;font-size:11px;color:#5a5f5c;left:13.90px;transform:translateX(-50%);margin-left:0.00px;">114</span>
<span style="top:730.23px;font-size:13.2px;color:#491313;letter-spacing:-0.030px;left:88.70px;transform:translateX(-50%);margin-left:-0.01px;">2021-05-30</span>
<span style="top:730.23px;font-size:13.2px;color:#3d3d3d;letter-spacing:0.020px;left:144.10px;">Presale разработка</span>
<span style="top:730.23px;font-size:13.2px;color:#491313;letter-spacing:-0.292px;left:401.30px;">1 297,87</span>
<span style="top:730.23px;font-size:13.2px;color:#3d3d3d;right:632.40px;">1:10</span>
<span style="top:730.23px;font-size:13.2px;color:#000000;right:529.60px;">1 514,18</span>
<span style="top:750.49px;font-size:11px;color:#5a5f5c;left:13.90px;transform:translateX(-50%);margin-left:0.00px;">115</span>
<span style="top:752.23px;font-size:13.2px;color:#491313;letter-spacing:-0.030px;left:88.70px;transform:translateX(-50%);margin-left:-0.01px;">2021-05-31</span>
<span style="top:752.23px;font-size:13.2px;color:#3d3d3d;letter-spacing:0.020px;left:144.10px;">Presale разработка</span>
<span style="top:752.23px;font-size:13.2px;color:#491313;letter-spacing:-0.292px;left:401.30px;">1 297,87</span>
<span style="top:752.23px;font-size:13.2px;color:#3d3d3d;right:632.40px;">0:40</span>
<span style="top:752.23px;font-size:13.2px;color:#000000;right:529.60px;">865,24</span>
<span style="top:771.99px;font-size:11px;color:#5a5f5c;left:13.90px;transform:translateX(-50%);margin-left:0.00px;">140</span>
<span style="top:773.23px;font-size:13.2px;color:#491313;letter-spacing:-0.030px;left:88.70px;transform:translateX(-50%);margin-left:-0.01px;">2021-04-26</span>
<span style="top:773.23px;font-size:13.2px;color:#491313;letter-spacing:0.050px;left:144.10px;">mininuniver.ru сайт</span>
<span style="top:773.23px;font-size:13.2px;color:#491313;letter-spacing:-0.292px;left:401.30px;">1 347,87</span>
<span style="top:773.23px;font-size:13.2px;color:#491313;right:632.40px;">1:30</span>
<span style="top:773.23px;font-size:13.2px;color:#000000;right:529.60px;">2 021,80</span>
<span style="top:773.23px;font-size:13.2px;color:#491313;letter-spacing:0.087px;left:710.80px;">прототип лендинга, помощь Владу</span>
<span style="top:793.49px;font-size:11px;color:#5a5f5c;left:13.90px;transform:translateX(-50%);margin-left:0.00px;">141</span>
<span style="top:795.23px;font-size:13.2px;color:#491313;letter-spacing:-0.030px;left:88.70px;transform:translateX(-50%);margin-left:-0.01px;">2021-05-04</span>
<span style="top:795.23px;font-size:13.2px;color:#491313;letter-spacing:0.050px;left:144.10px;">mininuniver.ru сайт</span>
<span style="top:795.23px;font-size:13.2px;color:#491313;letter-spacing:-0.292px;left:401.30px;">1 297,87</span>
<span style="top:795.23px;font-size:13.2px;color:#491313;right:632.40px;">0:18</span>
<span style="top:795.23px;font-size:13.2px;color:#000000;right:529.60px;">389,36</span>
<span style="top:795.23px;font-size:13.2px;color:#491313;letter-spacing:0.208px;left:710.80px;">обсуждение и правки в дизайн-концепцию</span>
<span style="top:814.99px;font-size:11px;color:#5a5f5c;left:13.90px;transform:translateX(-50%);margin-left:0.00px;">142</span>
<span style="top:816.23px;font-size:13.2px;color:#491313;letter-spacing:-0.030px;left:88.70px;transform:translateX(-50%);margin-left:-0.01px;">2021-05-08</span>
<span style="top:816.23px;font-size:13.2px;color:#491313;letter-spacing:0.050px;left:144.10px;">mininuniver.ru сайт</span>
<span style="top:816.23px;font-size:13.2px;color:#491313;letter-spacing:-0.292px;left:401.30px;">1 297,87</span>
<span style="top:816.23px;font-size:13.2px;color:#491313;right:632.40px;">1:24</span>
<span style="top:816.23px;font-size:13.2px;color:#000000;right:529.60px;">1 817,01</span>
<span style="top:816.23px;font-size:13.2px;color:#491313;letter-spacing:0.200px;left:710.80px;">звонок с клиентом, презентация дизайна</span>
<span style="top:835.99px;font-size:11px;color:#5a5f5c;left:13.90px;transform:translateX(-50%);margin-left:0.00px;">143</span>
<span style="top:837.23px;font-size:13.2px;color:#491313;letter-spacing:0.080px;left:88.70px;transform:translateX(-50%);margin-left:0.04px;">2021-05-11</span>
<span style="top:837.23px;font-size:13.2px;color:#491313;letter-spacing:0.050px;left:144.10px;">mininuniver.ru сайт</span>
<span style="top:837.23px;font-size:13.2px;color:#491313;letter-spacing:-0.292px;left:401.30px;">1 297,87</span>
<span style="top:837.23px;font-size:13.2px;color:#491313;right:632.40px;">0:48</span>
<span style="top:837.23px;font-size:13.2px;color:#000000;right:529.60px;">1 038,29</span>
<span style="top:837.23px;font-size:13.2px;color:#491313;letter-spacing:0.124px;left:710.80px;">созвон с Владом, объяснение правок от клиента</span>
<span style="top:269.13px;font-size:13.2px;color:#3d3d3d;letter-spacing:0.176px;left:710.80px;">написал сценарий защиты прототипов для Влада для защиты Мининского</span>
<span style="top:285.13px;font-size:13.2px;color:#2c57a5;left:713.50px;text-decoration:underline;text-underline-offset:2px;">https://paper.dropbox.com/doc/–BJI0DLgZtntJBj2IElMEggFDAQ-vbqh1jgWNu5WBgY6xAbCdEf</span>
<span style="top:521.23px;font-size:13.2px;color:#491313;letter-spacing:0.188px;left:710.80px;">правки прототипа и дизайна страницы Сайты</span>
<span style="top:521.23px;font-size:13.2px;color:#2c57a5;letter-spacing:0.150px;left:1001.20px;text-decoration:underline;text-underline-offset:2px;">https://www.figma.com/file/udSY9gBabcd</span>
<span style="top:564.93px;font-size:13.2px;color:#491313;letter-spacing:0.115px;left:710.80px;">Обучение сотрудников по маркетингу - фрилансеры, постановка и переделка</span>
<span style="top:581.23px;font-size:13.2px;color:#491313;letter-spacing:0.147px;left:710.80px;">задач по 4 проектам</span>
<span style="top:730.23px;font-size:13.2px;color:#491313;letter-spacing:0.184px;left:710.80px;text-decoration:underline;text-underline-offset:2px;">https://www.figma.com/file/HQ8kB5rnlURyPVIE92ljtL/</span>
<span style="top:730.23px;font-size:13.2px;color:#491313;left:1031.30px;transform:scaleX(0.8837);transform-origin:0 0;text-decoration:underline;text-underline-offset:2px;">%D0%9C%D0%B0%D0%BB%D1%</span>
<span style="top:880.10px;font-size:15px;color:#5b5f63;letter-spacing:0.302px;left:127.00px;">[Справка]</span>
<span style="top:880.10px;font-size:15px;color:#2f7d46;letter-spacing:0.133px;left:248.60px;-webkit-text-stroke:0.45px #2f7d46;">Журнал</span>
<span style="top:880.10px;font-size:15px;color:#5b5f63;letter-spacing:0.230px;left:378.30px;">Отчет</span>
<span style="top:880.10px;font-size:15px;color:#5b5f63;letter-spacing:-0.059px;left:494.20px;">Ставка</span>
<span style="top:880.10px;font-size:15px;color:#5b5f63;letter-spacing:0.322px;left:595.60px;">Справочник</span>
<span style="top:880.10px;font-size:15px;color:#5b5f63;letter-spacing:0.196px;left:734.00px;">План с октября</span>
<span style="top:78.76px;font-size:16px;color:#2e7d40;font-weight:700;letter-spacing:-0.863px;left:584.20px;">B</span>
<span style="top:80.06px;font-size:16px;color:#111;font-weight:700;left:1176.80px;">P</span>
<span style="top:81.62px;font-size:11.5px;color:#111;font-weight:700;left:1186.20px;">Y</span>
</div>
<div style="left:392.3px;top:249.6px;width:7.4px;height:7.4px;background:#4272dc;border:1px solid #fff;box-sizing:border-box"></div>
<svg style="left:122.90px;top:211.30px;" width="13" height="8" viewBox="0 0 13 8"><path d="M0.3 1h12.2M2.7 4h7.4M5.1 7h2.6" stroke="#14254f" stroke-width="1.25" fill="none"/></svg>
<svg style="left:482.70px;top:211.30px;" width="13" height="8" viewBox="0 0 13 8"><path d="M0.3 1h12.2M2.7 4h7.4M5.1 7h2.6" stroke="#14254f" stroke-width="1.25" fill="none"/></svg>
<svg style="left:585.90px;top:211.30px;" width="13" height="8" viewBox="0 0 13 8"><path d="M0.3 1h12.2M2.7 4h7.4M5.1 7h2.6" stroke="#14254f" stroke-width="1.25" fill="none"/></svg>
<svg style="left:689.20px;top:211.30px;" width="13" height="8" viewBox="0 0 13 8"><path d="M0.3 1h12.2M2.7 4h7.4M5.1 7h2.6" stroke="#14254f" stroke-width="1.25" fill="none"/></svg>
<svg style="left:1200.80px;top:211.30px;" width="13" height="8" viewBox="0 0 13 8"><path d="M0.3 1h12.2M2.7 4h7.4M5.1 7h2.6" stroke="#14254f" stroke-width="1.25" fill="none"/></svg>
<svg style="left:379.80px;top:211.30px;" width="12" height="11" viewBox="0 0 12 11"><path d="M0.3 0.3h11.4l-4.3 5.2v4.9h-2.8v-4.9z" fill="#000"/></svg>
<svg style="left:382.60px;top:282.30px;" width="8.4" height="4.4" viewBox="0 0 8.4 4.4"><path d="M0 0h8.4l-4.2 4.4z" fill="#3d7bd9"/></svg>
<svg style="left:382.60px;top:304.30px;" width="8.4" height="4.4" viewBox="0 0 8.4 4.4"><path d="M0 0h8.4l-4.2 4.4z" fill="#7a7a7a"/></svg>
<svg style="left:382.60px;top:325.30px;" width="8.4" height="4.4" viewBox="0 0 8.4 4.4"><path d="M0 0h8.4l-4.2 4.4z" fill="#3d7bd9"/></svg>
<svg style="left:382.60px;top:347.30px;" width="8.4" height="4.4" viewBox="0 0 8.4 4.4"><path d="M0 0h8.4l-4.2 4.4z" fill="#7a7a7a"/></svg>
<svg style="left:382.60px;top:368.30px;" width="8.4" height="4.4" viewBox="0 0 8.4 4.4"><path d="M0 0h8.4l-4.2 4.4z" fill="#3d7bd9"/></svg>
<svg style="left:382.60px;top:389.30px;" width="8.4" height="4.4" viewBox="0 0 8.4 4.4"><path d="M0 0h8.4l-4.2 4.4z" fill="#7a7a7a"/></svg>
<svg style="left:382.60px;top:411.30px;" width="8.4" height="4.4" viewBox="0 0 8.4 4.4"><path d="M0 0h8.4l-4.2 4.4z" fill="#3d7bd9"/></svg>
<svg style="left:382.60px;top:432.30px;" width="8.4" height="4.4" viewBox="0 0 8.4 4.4"><path d="M0 0h8.4l-4.2 4.4z" fill="#7a7a7a"/></svg>
<svg style="left:382.60px;top:454.30px;" width="8.4" height="4.4" viewBox="0 0 8.4 4.4"><path d="M0 0h8.4l-4.2 4.4z" fill="#3d7bd9"/></svg>
<svg style="left:382.60px;top:475.30px;" width="8.4" height="4.4" viewBox="0 0 8.4 4.4"><path d="M0 0h8.4l-4.2 4.4z" fill="#7a7a7a"/></svg>
<svg style="left:382.60px;top:497.30px;" width="8.4" height="4.4" viewBox="0 0 8.4 4.4"><path d="M0 0h8.4l-4.2 4.4z" fill="#3d7bd9"/></svg>
<svg style="left:382.60px;top:518.30px;" width="8.4" height="4.4" viewBox="0 0 8.4 4.4"><path d="M0 0h8.4l-4.2 4.4z" fill="#7a7a7a"/></svg>
<svg style="left:382.60px;top:540.30px;" width="8.4" height="4.4" viewBox="0 0 8.4 4.4"><path d="M0 0h8.4l-4.2 4.4z" fill="#3d7bd9"/></svg>
<svg style="left:382.60px;top:578.30px;" width="8.4" height="4.4" viewBox="0 0 8.4 4.4"><path d="M0 0h8.4l-4.2 4.4z" fill="#7a7a7a"/></svg>
<svg style="left:382.60px;top:599.30px;" width="8.4" height="4.4" viewBox="0 0 8.4 4.4"><path d="M0 0h8.4l-4.2 4.4z" fill="#3d7bd9"/></svg>
<svg style="left:382.60px;top:620.30px;" width="8.4" height="4.4" viewBox="0 0 8.4 4.4"><path d="M0 0h8.4l-4.2 4.4z" fill="#7a7a7a"/></svg>
<svg style="left:382.60px;top:642.30px;" width="8.4" height="4.4" viewBox="0 0 8.4 4.4"><path d="M0 0h8.4l-4.2 4.4z" fill="#3d7bd9"/></svg>
<svg style="left:382.60px;top:663.30px;" width="8.4" height="4.4" viewBox="0 0 8.4 4.4"><path d="M0 0h8.4l-4.2 4.4z" fill="#7a7a7a"/></svg>
<svg style="left:382.60px;top:685.30px;" width="8.4" height="4.4" viewBox="0 0 8.4 4.4"><path d="M0 0h8.4l-4.2 4.4z" fill="#3d7bd9"/></svg>
<svg style="left:382.60px;top:706.30px;" width="8.4" height="4.4" viewBox="0 0 8.4 4.4"><path d="M0 0h8.4l-4.2 4.4z" fill="#7a7a7a"/></svg>
<svg style="left:382.60px;top:727.30px;" width="8.4" height="4.4" viewBox="0 0 8.4 4.4"><path d="M0 0h8.4l-4.2 4.4z" fill="#3d7bd9"/></svg>
<svg style="left:382.60px;top:749.30px;" width="8.4" height="4.4" viewBox="0 0 8.4 4.4"><path d="M0 0h8.4l-4.2 4.4z" fill="#7a7a7a"/></svg>
<svg style="left:382.60px;top:770.30px;" width="8.4" height="4.4" viewBox="0 0 8.4 4.4"><path d="M0 0h8.4l-4.2 4.4z" fill="#3d7bd9"/></svg>
<svg style="left:382.60px;top:792.30px;" width="8.4" height="4.4" viewBox="0 0 8.4 4.4"><path d="M0 0h8.4l-4.2 4.4z" fill="#7a7a7a"/></svg>
<svg style="left:382.60px;top:813.30px;" width="8.4" height="4.4" viewBox="0 0 8.4 4.4"><path d="M0 0h8.4l-4.2 4.4z" fill="#3d7bd9"/></svg>
<svg style="left:382.60px;top:834.30px;" width="8.4" height="4.4" viewBox="0 0 8.4 4.4"><path d="M0 0h8.4l-4.2 4.4z" fill="#7a7a7a"/></svg>
<div style="left:1218.4px;top:258px;width:13.6px;height:589.0px;background:#f6f6f6"></div>
<div style="left:1217.7px;top:257.7px;width:1.2px;height:589.3px;background:#4f8457"></div>
<svg style="left:206.80px;top:877.80px;" width="8.4" height="4.4" viewBox="0 0 8.4 4.4"><path d="M0 0h8.4l-4.2 4.4z" fill="#80868b"/></svg>
<svg style="left:315.30px;top:877.80px;" width="8.4" height="4.4" viewBox="0 0 8.4 4.4"><path d="M0 0h8.4l-4.2 4.4z" fill="#2f7d46"/></svg>
<svg style="left:430.90px;top:877.80px;" width="8.4" height="4.4" viewBox="0 0 8.4 4.4"><path d="M0 0h8.4l-4.2 4.4z" fill="#80868b"/></svg>
<svg style="left:553.00px;top:877.80px;" width="8.4" height="4.4" viewBox="0 0 8.4 4.4"><path d="M0 0h8.4l-4.2 4.4z" fill="#80868b"/></svg>
<svg style="left:691.00px;top:877.80px;" width="8.4" height="4.4" viewBox="0 0 8.4 4.4"><path d="M0 0h8.4l-4.2 4.4z" fill="#80868b"/></svg>
<svg style="left:852.50px;top:877.80px;" width="8.4" height="4.4" viewBox="0 0 8.4 4.4"><path d="M0 0h8.4l-4.2 4.4z" fill="#80868b"/></svg>
<svg style="left:42.70px;top:874.10px;" width="10.4" height="10.4" viewBox="0 0 10.4 10.4"><path d="M5.2 0v10.4M0 5.2h10.4" stroke="#5f6368" stroke-width="2"/></svg>
<svg style="left:73.30px;top:874.00px;" width="13" height="12" viewBox="0 0 13 12"><path d="M0 1h13M0 4.3h13M0 7.6h13M0 10.9h13" stroke="#5f6368" stroke-width="1.8"/></svg>
<svg style="left:355.60px;top:871.30px;" width="12.6" height="16" viewBox="0 0 12.6 16"><path d="M3.2 6V4.2a3.1 3.1 0 0 1 6.2 0V6" fill="none" stroke="#77797c" stroke-width="1.7"/><rect x="0.3" y="5.8" width="12" height="9.8" rx="1.5" fill="#77797c"/><circle cx="6.3" cy="10.7" r="1.4" fill="#f4f5f5"/></svg>
<svg style="left:471.50px;top:871.30px;" width="12.6" height="16" viewBox="0 0 12.6 16"><path d="M3.2 6V4.2a3.1 3.1 0 0 1 6.2 0V6" fill="none" stroke="#77797c" stroke-width="1.7"/><rect x="0.3" y="5.8" width="12" height="9.8" rx="1.5" fill="#77797c"/><circle cx="6.3" cy="10.7" r="1.4" fill="#f4f5f5"/></svg>
<svg style="left:379.50px;top:4.20px;" width="19.4" height="19.4" viewBox="0 0 24 24"><path d="M22 9.24l-7.19-.62L12 2 9.19 8.63 2 9.24l5.46 4.73L5.82 21 12 17.27 18.18 21l-1.63-7.03L22 9.24zM12 15.4l-3.76 2.27 1-4.28-3.32-2.88 4.38-.38L12 6.1l1.71 4.04 4.38.38-3.32 2.88 1 4.28L12 15.4z" fill="#5f6368"/></svg>
<svg style="left:411.10px;top:4.60px;" width="18.4" height="18.4" viewBox="0 0 24 24"><path d="M20 21v-3h3v-2h-3v-3h-2v3h-3v2h3v3h2zm-4.97.5H5.66c-.72 0-1.38-.38-1.73-1L1.57 16.4c-.36-.62-.35-1.38.01-2L7.92 3.49C8.28 2.88 8.94 2.5 9.65 2.5h4.7c.71 0 1.37.38 1.73.99l4.48 7.71A5.84 5.84 0 0 0 19 11c-.28 0-.56.02-.84.06L14.35 4.5h-4.7L3.31 15.41l2.35 4.09h7.89c.35.77.85 1.45 1.48 2zM13.34 15c-.22.63-.34 1.3-.34 2H7.250l-.73-1.27 4.58-7.98h1.8l2.53 4.42c-.56.42-1.05.93-1.44 1.51l-2-3.49L9.25 15h4.09z" fill="#5f6368"/></svg>
<svg style="left:442.10px;top:5.70px;" width="17" height="17" viewBox="0 0 24 24"><path d="M19.35 10.04C18.67 6.59 15.64 4 12 4 9.11 4 6.6 5.64 5.35 8.04 2.34 8.36 0 10.91 0 14c0 3.31 2.69 6 6 6h13c2.76 0 5-2.24 5-5 0-2.64-2.05-4.78-4.65-4.96zM19 18H6c-2.21 0-4-1.79-4-4 0-2.05 1.53-3.76 3.56-3.97l1.07-.11.5-.95C8.08 7.14 9.94 6 12 6c2.62 0 4.88 1.86 5.39 4.43l.3 1.5 1.53.11c1.56.1 2.78 1.41 2.78 2.96 0 1.65-1.35 3-3 3zm-9-3.820l-2.090-2.090L6.500 13.500 10 17l6.010-6.010-1.410-1.410z" fill="#5f6368"/></svg>
<svg style="left:14px;top:6.8px" width="27.4" height="36.6" viewBox="0 0 27.4 36.6">
<path d="M3.2 0H17.6l9.400 9.400V33.2a3.200 3.200 0 0 1-3.200 3.200H3.200A3.200 3.200 0 0 1 0 33.200V3.200A3.200 3.200 0 0 1 3.200 0z" fill="#5aa55f"/>
<path d="M17.600 0l9.400 9.400H19.800A2.200 2.200 0 0 1 17.600 7.200z" fill="#487e4e"/>
<path d="M5.400 14h16.600v12.200H5.400zM7.700 16.400v2.500h4.900v-2.500zM15.100 16.400v2.500h4.900v-2.500zM7.700 21.500v2.500h4.900v-2.500zM15.100 21.500v2.500h4.900v-2.500z" fill="#ffffff" fill-rule="evenodd"/>
<path d="M7.700 16.400h4.900v2.500H7.700zM15.100 16.400h4.900v2.500h-4.900zM7.700 21.500h4.900v2.500H7.700zM15.100 21.500h4.900v2.500h-4.900z" fill="none" stroke="#6a8a6c" stroke-width="0.500"/>
</svg>
<svg style="left:27.00px;top:70.10px;" width="18.6" height="18.6" viewBox="0 0 24 24"><path d="M12.5 8c-2.65 0-5.05.99-6.9 2.6L2 7v9h9l-3.62-3.62c1.39-1.16 3.16-1.88 5.12-1.88 3.54 0 6.55 2.31 7.6 5.5l2.37-.78C21.08 11.03 17.15 8 12.5 8z" fill="#585858"/></svg>
<svg style="left:55.60px;top:70.10px;" width="18.6" height="18.6" viewBox="0 0 24 24"><path d="M18.4 10.6C16.55 8.99 14.15 8 11.5 8c-4.65 0-8.58 3.03-9.96 7.22L3.9 16c1.05-3.19 4.05-5.5 7.6-5.5 1.95 0 3.73.72 5.12 1.88L13 16h9V7l-3.6 3.6z" fill="#585858"/></svg>
<svg style="left:83.70px;top:69.60px;" width="18.8" height="18.8" viewBox="0 0 24 24"><path d="M19 8H5c-1.66 0-3 1.34-3 3v6h4v4h12v-4h4v-6c0-1.66-1.34-3-3-3zm-3 11H8v-5h8v5zm3-7c-.55 0-1-.45-1-1s.45-1 1-1 1 .45 1 1-.45 1-1 1zm-1-9H6v4h12V3z" fill="#585858"/></svg>
<svg style="left:114.00px;top:70.00px;" width="16" height="17" viewBox="0 0 16 17"><rect x="1.800" y="2" width="10.200" height="4.600" rx="0.800" fill="#585858"/><path d="M12 4.200h2v4.400H6.800V15.700" stroke="#585858" stroke-width="1.900" fill="none"/></svg>
<svg style="left:199.30px;top:76.20px;" width="8.2" height="4.3" viewBox="0 0 8.2 4.3"><path d="M0 0h8.2l-4.1 4.3z" fill="#585858"/></svg>
<svg style="left:361.20px;top:77.50px;" width="8.2" height="4.3" viewBox="0 0 8.2 4.3"><path d="M0 0h8.2l-4.1 4.3z" fill="#585858"/></svg>
<svg style="left:477.50px;top:76.90px;" width="8.2" height="4.3" viewBox="0 0 8.2 4.3"><path d="M0 0h8.2l-4.1 4.3z" fill="#585858"/></svg>
<svg style="left:554.00px;top:76.90px;" width="8.2" height="4.3" viewBox="0 0 8.2 4.3"><path d="M0 0h8.2l-4.1 4.3z" fill="#585858"/></svg>
<svg style="left:291.20px;top:83.40px;" width="9" height="6" viewBox="0 0 9 6"><path d="M9 3H1.800M4 0.600L1.500 3 4 5.400" stroke="#585858" stroke-width="1.300" fill="none"/></svg>
<svg style="left:321.40px;top:83.40px;" width="9" height="6" viewBox="0 0 9 6"><path d="M0 3h7.200M5 0.600L7.500 3 5 5.400" stroke="#585858" stroke-width="1.300" fill="none"/></svg>
<svg style="left:611.00px;top:71.00px;" width="16" height="15" viewBox="0 0 16 15"><path d="M5.300 2.300h9M1.200 13.200h9M9.900 2.300L5.600 13.200" stroke="#585858" stroke-width="1.700" fill="none"/></svg>
<svg style="left:637.30px;top:70.60px;" width="19.6" height="19.6" viewBox="0 0 24 24"><path d="M7.24 8.75c-.26-.48-.39-1.03-.39-1.67 0-.61.13-1.16.4-1.67.26-.5.63-.93 1.11-1.29.48-.35 1.05-.63 1.7-.83.66-.19 1.39-.29 2.18-.29.81 0 1.54.11 2.21.34.66.22 1.23.54 1.69.94.47.4.83.88 1.08 1.43.25.55.38 1.15.38 1.81h-3.01c0-.31-.05-.59-.15-.85-.09-.27-.24-.49-.44-.68-.2-.19-.45-.33-.75-.44-.3-.1-.66-.16-1.06-.16-.39 0-.74.04-1.03.13-.29.09-.53.21-.72.36-.19.16-.34.34-.44.55-.1.21-.15.43-.15.66 0 .48.25.88.74 1.21.38.25.77.48 1.41.7H7.39c-.05-.08-.11-.17-.15-.25zM21 12v-2H3v2h9.62c.18.07.4.14.55.2.37.17.66.34.87.51.21.17.35.36.43.57.07.2.11.43.11.69 0 .23-.05.45-.14.66-.09.2-.23.38-.42.53-.19.15-.42.26-.71.35-.29.08-.63.13-1.01.13-.43 0-.83-.04-1.18-.13s-.66-.23-.91-.42c-.25-.19-.45-.44-.59-.75-.14-.31-.25-.76-.25-1.21H6.4c0 .55.08 1.13.24 1.58.16.45.37.85.65 1.21.28.35.6.66.98.92.37.26.78.48 1.22.65.44.17.9.3 1.38.39.48.08.96.13 1.44.13.8 0 1.53-.09 2.18-.28s1.21-.45 1.67-.79c.46-.34.82-.77 1.07-1.27s.38-1.07.38-1.71c0-.6-.1-1.14-.31-1.61-.05-.11-.11-.23-.17-.33H21z" fill="#585858"/></svg>
<svg style="left:666.65px;top:67.85px;" width="19.5" height="19.5" viewBox="0 0 24 24"><path d="M11 3L5.5 17h2.25l1.12-3h6.25l1.12 3h2.25L13 3h-2zm-1.38 9L12 5.67 14.38 12H9.62z" fill="#585858"/></svg>
<svg style="left:706.3px;top:68.9px" width="18.4" height="18.4" viewBox="0 0 24 24"><path d="M16.56 8.94L7.62 0 6.21 1.41l2.38 2.38-5.15 5.15c-.59.59-.59 1.54 0 2.12l5.5 5.5c.29.29.68.44 1.06.44s.77-.15 1.06-.44l5.5-5.5c.59-.58.59-1.53 0-2.12zM5.21 10L10 5.21 14.79 10H5.21zM19 11.5s-2 2.17-2 3.5c0 1.1.9 2 2 2s2-.9 2-2c0-1.33-2-3.5-2-3.5z" fill="#585858" transform="translate(1.500 0)"/></svg>
<svg style="left:737.70px;top:69.20px;" width="18.4" height="18.4" viewBox="0 0 24 24"><path d="M3 3v18h18V3H3zm8 16H5v-6h6v6zm0-8H5V5h6v6zm8 8h-6v-6h6v6zm0-8h-6V5h6v6z" fill="#585858"/></svg>
<svg style="left:769.80px;top:71.40px;" width="17" height="15" viewBox="0 0 17 15"><path d="M0.800 4V0.800H4M6.500 0.800h4M13 0.800h3.200V4M0.800 11v3.200H4M6.500 14.200h4M13 14.200h3.200V11" stroke="#c2c2c2" stroke-width="2" fill="none"/><path d="M0.500 7.500h5.500M3.800 5L6.300 7.500 3.800 10M16.500 7.500h-5.500M13.200 5L10.700 7.500 13.200 10" stroke="#c2c2c2" stroke-width="1.700" fill="none"/></svg>
<svg style="left:796.40px;top:76.30px;" width="8.2" height="4.3" viewBox="0 0 8.2 4.3"><path d="M0 0h8.2l-4.1 4.3z" fill="#c2c2c2"/></svg>
<svg style="left:825.00px;top:70.50px;" width="14.2" height="15" viewBox="0 0 14.2 15"><path d="M0.200 1.200h13.800M2.500 5.400h9.200M0.200 9.600h13.800M2.500 13.700h9.200" stroke="#585858" stroke-width="1.800" fill="none"/></svg>
<svg style="left:845.50px;top:76.30px;" width="8.2" height="4.3" viewBox="0 0 8.2 4.3"><path d="M0 0h8.2l-4.1 4.3z" fill="#585858"/></svg>
<svg style="left:862.70px;top:69.00px;" width="18.4" height="18.4" viewBox="0 0 24 24"><path d="M8 19h3v4h2v-4h3l-4-4-4 4zm8-14h-3V1h-2v4H8l4 4 4-4zM4 11v2h16v-2H4z" fill="#585858"/></svg>
<svg style="left:885.50px;top:76.30px;" width="8.2" height="4.3" viewBox="0 0 8.2 4.3"><path d="M0 0h8.2l-4.1 4.3z" fill="#585858"/></svg>
<svg style="left:904.30px;top:70.60px;" width="15" height="16" viewBox="0 0 15 16"><path d="M1 0.500v15M14 0.500v15" stroke="#585858" stroke-width="1.700" fill="none"/><path d="M4 5h4.300a2.700 2.700 0 0 1 0 5.400H4.800" stroke="#585858" stroke-width="1.500" fill="none"/><path d="M7.200 7.600L4.200 10.400 7.200 13.200z" fill="#585858"/></svg>
<svg style="left:925.10px;top:76.30px;" width="8.2" height="4.3" viewBox="0 0 8.2 4.3"><path d="M0 0h8.2l-4.1 4.3z" fill="#585858"/></svg>
<svg style="left:943.80px;top:69.80px;" width="17" height="17" viewBox="0 0 17 17"><path d="M1.200 1.500L12 4.800 5 11z" stroke="#585858" stroke-width="1.500" fill="none" stroke-linejoin="round"/><path d="M5.500 16L15.500 6.500" stroke="#585858" stroke-width="1.600" fill="none"/><path d="M12 5.500l4.300-0.300-0.300 4.300z" fill="#585858"/></svg>
<svg style="left:965.10px;top:76.30px;" width="8.2" height="4.3" viewBox="0 0 8.2 4.3"><path d="M0 0h8.2l-4.1 4.3z" fill="#585858"/></svg>
<svg style="left:990.75px;top:67.95px;" width="21.5" height="21.5" viewBox="0 0 24 24"><path d="M3.9 12c0-1.71 1.39-3.1 3.1-3.1h4V7H7c-2.76 0-5 2.24-5 5s2.24 5 5 5h4v-1.9H7c-1.71 0-3.1-1.39-3.1-3.1zM8 13h8v-2H8v2zm9-6h-4v1.9h4c1.71 0 3.1 1.39 3.1 3.1s-1.39 3.1-3.1 3.1h-4V17h4c2.76 0 5-2.24 5-5s-2.24-5-5-5z" fill="#585858"/></svg>
<svg style="left:1022.50px;top:71.10px;" width="16" height="16" viewBox="0 0 16 16"><path d="M1 1.200h13.700v10H4.800L1 14.500z" stroke="#585858" stroke-width="1.700" fill="none" stroke-linejoin="round"/><path d="M8 3.300v6M5 6.300h6" stroke="#585858" stroke-width="1.500" fill="none"/></svg>
<svg style="left:1047.95px;top:67.85px;" width="21.5" height="21.5" viewBox="0 0 24 24"><path d="M9 17H7v-7h2v7zm4 0h-2V7h2v10zm4 0h-2v-4h2v4zm2 2H5V5h14v14zm0-16H5c-1.1 0-2 .9-2 2v14c0 1.1.9 2 2 2h14c1.1 0 2-.9 2-2V5c0-1.1-.9-2-2-2z" fill="#585858"/></svg>
<svg style="left:1078.80px;top:69.70px;" width="19" height="19" viewBox="0 0 24 24"><path d="M4.25 5.61C6.27 8.2 10 13 10 13v6c0 .55.45 1 1 1h2c.55 0 1-.45 1-1v-6s3.72-4.8 5.74-7.39c.51-.66.04-1.61-.79-1.61H5.04c-.83 0-1.3.95-.79 1.61z" fill="#38853f"/></svg>
<svg style="left:1107.20px;top:76.30px;" width="8.2" height="4.3" viewBox="0 0 8.2 4.3"><path d="M0 0h8.2l-4.1 4.3z" fill="#585858"/></svg>
<svg style="left:1127.00px;top:70.50px;" width="12.5" height="16" viewBox="0 0 12.5 16"><path d="M11.300 1.600H1.800L7.400 7.900 1.800 14.300H11.300" stroke="#585858" stroke-width="1.800" fill="none" stroke-linejoin="miter"/></svg>
<svg style="left:1146.50px;top:76.30px;" width="8.2" height="4.3" viewBox="0 0 8.2 4.3"><path d="M0 0h8.2l-4.1 4.3z" fill="#585858"/></svg>
<svg style="left:1203.30px;top:76.30px;" width="8.2" height="4.3" viewBox="0 0 8.2 4.3"><path d="M0 0h8.2l-4.1 4.3z" fill="#585858"/></svg>
<svg style="left:82.40px;top:108.70px;" width="7.6" height="3.6" viewBox="0 0 7.6 3.6"><path d="M0 0h7.600l-3.800 3.600z" fill="#5f6368"/></svg>
</div></body></html>
